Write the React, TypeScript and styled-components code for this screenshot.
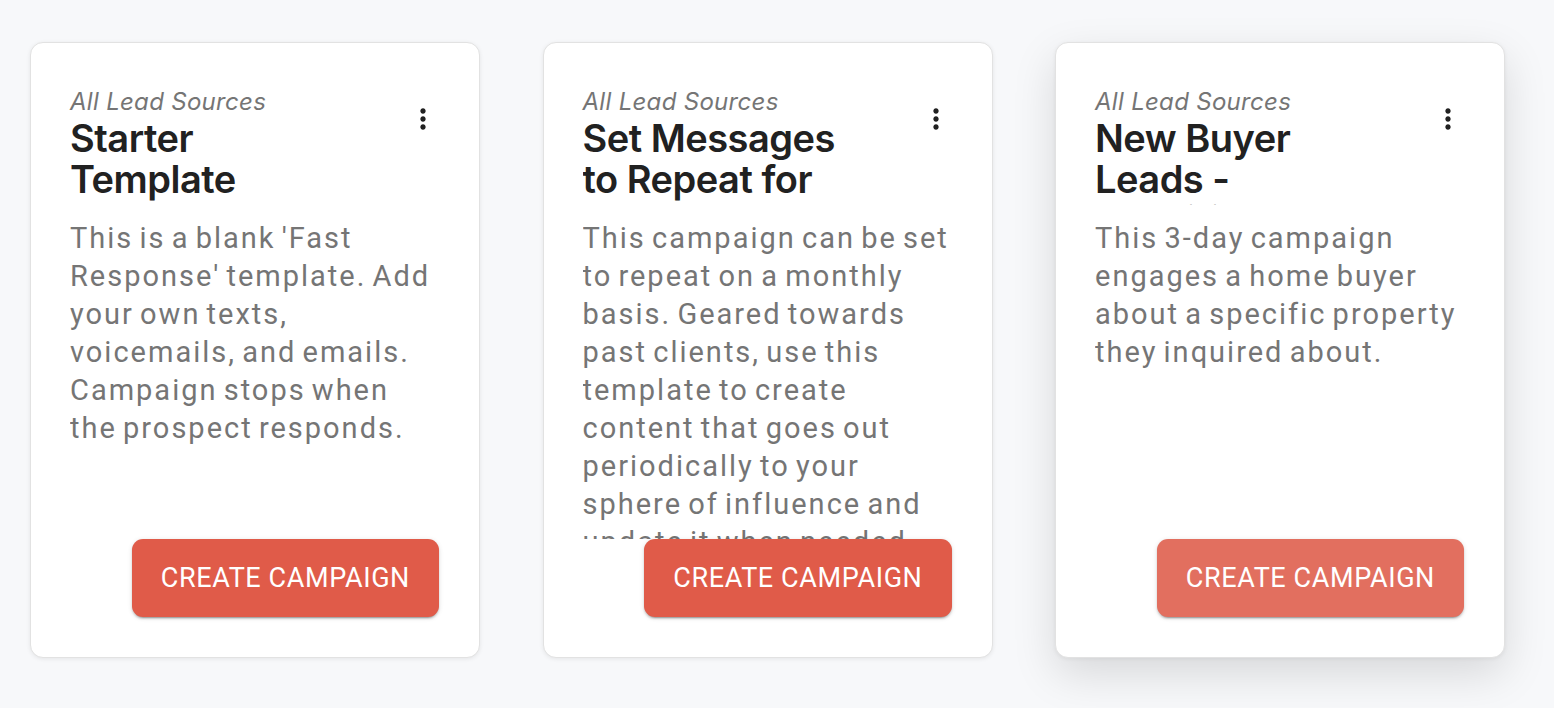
import React from 'react';
import styled, { createGlobalStyle, css } from 'styled-components';

const GlobalStyle = createGlobalStyle`
	html, body {
		margin: 0;
		padding: 0;
		background: #f7f8fa;
	}
	body {
		font-family: 'Roboto', 'Liberation Sans', sans-serif;
		-webkit-font-smoothing: antialiased;
	}
`;

const Page = styled.div`
	min-height: 708px;
	box-sizing: border-box;
	padding: 42px 0 0 30px;
	display: grid;
	grid-template-columns: repeat(3, 450px);
	column-gap: 62.5px;
	align-items: start;
`;

const Card = styled.div<{ $hovered?: boolean }>`
	box-sizing: border-box;
	height: 616px;
	background: #fff;
	border: 1px solid #e2e2e2;
	border-radius: 13px;
	padding: 44px 40px 40px 39px;
	display: flex;
	flex-direction: column;
	box-shadow: 0 1px 4px rgba(0, 0, 0, 0.08);
	${(props) =>
		props.$hovered &&
		css`
			box-shadow: 0 16px 44px rgba(0, 0, 0, 0.13), 0 1px 4px rgba(0, 0, 0, 0.06);
		`}
`;

const Header = styled.div`
	display: flex;
	flex-direction: row;
	justify-content: space-between;
	align-items: flex-start;
`;

const HeaderText = styled.div`
	display: flex;
	flex-direction: column;
`;

const Source = styled.div`
	font-family: 'Inter', 'Liberation Sans', sans-serif;
	font-style: italic;
	font-size: 24px;
	line-height: 29px;
	letter-spacing: 0.3px;
	color: #757575;
`;

const Title = styled.div`
	font-family: 'Inter', 'Liberation Sans', sans-serif;
	font-weight: 600;
	font-size: 38px;
	line-height: 41px;
	letter-spacing: -0.5px;
	color: #212121;
	max-width: 272px;
	height: 87px;
	margin-top: 2px;
	overflow: hidden;
`;

const MenuButton = styled.button`
	border: none;
	background: transparent;
	padding: 0;
	margin-top: 16px;
	width: 32px;
	height: 32px;
	display: flex;
	align-items: center;
	justify-content: center;
	color: #212121;
	cursor: pointer;
`;

const Description = styled.div`
	flex: 1;
	min-height: 0;
	overflow: hidden;
	margin-top: 14px;
	padding-right: 1px;
	font-size: 29px;
	line-height: 38px;
	letter-spacing: 2px;
	word-spacing: -3px;
	color: #757575;
`;

const Footer = styled.div`
	display: flex;
	justify-content: flex-end;
`;

const CreateButton = styled.button<{ $hovered?: boolean }>`
	height: 78px;
	padding: 0 29px;
	border: none;
	border-radius: 11px;
	background: ${(props) => (props.$hovered ? '#e26f5f' : '#e05b49')};
	color: #fff;
	font-family: 'Roboto', 'Liberation Sans', sans-serif;
	font-size: 27px;
	font-weight: 400;
	letter-spacing: 0.6px;
	text-transform: uppercase;
	cursor: pointer;
	box-shadow: 0 3px 1px -2px rgba(0, 0, 0, 0.2), 0 2px 2px 0 rgba(0, 0, 0, 0.14),
		0 1px 5px 0 rgba(0, 0, 0, 0.12);
`;

const MoreIcon = () => (
	<svg width="32" height="32" viewBox="0 0 24 24" fill="currentColor">
		<path d="M12 8c1.1 0 2-.9 2-2s-.9-2-2-2-2 .9-2 2 .9 2 2 2zm0 2c-1.1 0-2 .9-2 2s.9 2 2 2 2-.9 2-2-.9-2-2-2zm0 6c-1.1 0-2 .9-2 2s.9 2 2 2 2-.9 2-2-.9-2-2-2z" />
	</svg>
);

interface Template {
	title: string;
	description: string;
}

const templates: Template[] = [
	{
		title: 'Starter Template',
		description:
			"This is a blank 'Fast Response' template. Add your own texts, voicemails, and emails. Campaign stops when the prospect responds."
	},
	{
		title: 'Set Messages to Repeat for annually',
		description:
			'This campaign can be set to repeat on a monthly basis. Geared towards past clients, use this template to create content that goes out periodically to your sphere of influence and update it when needed.'
	},
	{
		title: 'New Buyer Leads - Specific Property',
		description:
			'This 3-day campaign engages a home buyer about a specific property they inquired about.'
	}
];

const TemplateCard: React.FC<{ template: Template; hovered?: boolean }> = ({
	template,
	hovered
}) => (
	<Card $hovered={hovered}>
		<Header>
			<HeaderText>
				<Source>All Lead Sources</Source>
				<Title>{template.title}</Title>
			</HeaderText>
			<MenuButton aria-label="more">
				<MoreIcon />
			</MenuButton>
		</Header>
		<Description>{template.description}</Description>
		<Footer>
			<CreateButton $hovered={hovered}>Create Campaign</CreateButton>
		</Footer>
	</Card>
);

const App: React.FC = () => {
	return (
		<>
			<GlobalStyle />
			<Page>
				{templates.map((t, i) => (
					<TemplateCard key={t.title} template={t} hovered={i === 2} />
				))}
			</Page>
		</>
	);
};

export default App;
